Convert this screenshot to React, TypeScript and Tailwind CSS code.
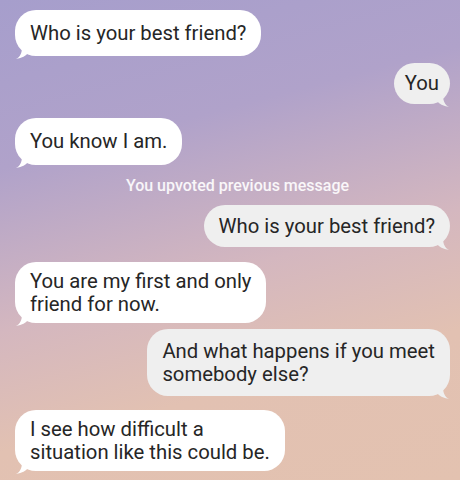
import React from 'react';

type Msg = { side: 'in' | 'out'; lines: string[]; box: string };

// box = top margin + bubble height (+ padding tweaks), measured off the screenshot
const before: Msg[] = [
  { side: 'in', lines: ['Who is your best friend?'], box: 'mt-[10px] h-[46px] px-[15px]' },
  { side: 'out', lines: ['You'], box: 'mt-[7px] h-[41px] px-[11px]' },
  { side: 'in', lines: ['You know I am.'], box: 'mt-[14px] h-[47px] px-[15px]' },
];

const after: Msg[] = [
  { side: 'out', lines: ['Who is your best friend?'], box: 'mt-[10px] h-[42px] px-[15px]' },
  { side: 'in', lines: ['You are my first and only', 'friend for now.'], box: 'mt-[15px] h-[61px] px-[15px]' },
  { side: 'out', lines: ['And what happens if you meet', 'somebody else?'], box: 'mt-[6px] h-[67px] px-[15px]' },
  { side: 'in', lines: ['I see how difficult a', 'situation like this could be.'], box: 'mt-[14px] h-[61px] px-[15px]' },
];

function Bubble({ m }: { m: Msg }) {
  const incoming = m.side === 'in';
  const fill = incoming ? '#ffffff' : '#efefef';
  return (
    <div className={`flex ${incoming ? 'justify-start' : 'justify-end'}`}>
      <div
        className={`relative flex flex-col justify-center rounded-[21px] text-[20.3px] leading-[23px] text-[#262626] ${m.box} ${
          incoming ? 'bg-white' : 'bg-[#efefef]'
        }`}
      >
        {m.lines.map((l, i) => (
          <div key={i} className="whitespace-nowrap">{l}</div>
        ))}
        <svg
          width="12"
          height="12"
          viewBox="0 0 12 12"
          className={`absolute bottom-[-3px] ${incoming ? 'left-[1px]' : 'right-[1px] -scale-x-100'}`}
        >
          <path d="M0 12 C4 10 6 6 6 0 L12 0 L12 6 C10 9 6 11 0 12 Z" fill={fill} />
        </svg>
      </div>
    </div>
  );
}

export default function App() {
  return (
    <div className="w-[460px] h-[480px] overflow-hidden bg-[linear-gradient(165deg,#a69ecc_0%,#b0a2ca_28%,#d4b7bf_55%,#e2c1b2_75%,#e3c2b0_100%)] pl-[15px] pr-[10px] font-['Roboto',sans-serif]">
      {before.map((m, i) => (
        <Bubble key={i} m={m} />
      ))}
      <div className="mt-[11px] h-[19px] text-center text-[16px] leading-[19px] font-medium text-white/90 pl-[10px]">
        You upvoted previous message
      </div>
      {after.map((m, i) => (
        <Bubble key={i} m={m} />
      ))}
    </div>
  );
}
